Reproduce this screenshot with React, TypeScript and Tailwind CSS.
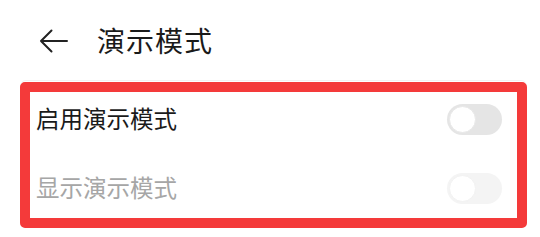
import React from 'react';

const font = { fontFamily: '"Noto Sans CJK SC", "Noto Sans", sans-serif' };

function Toggle({ dim }: { dim?: boolean }) {
  return (
    <div
      className={`flex items-center w-[55px] h-[31px] rounded-full p-[2px] ${
        dim ? 'bg-[#f4f4f4]' : 'bg-[#e5e5e5]'
      }`}
    >
      <div
        className={`w-[27px] h-[27px] rounded-full bg-white border ${
          dim ? 'border-[#f2f2f2]' : 'border-[#e8e8e8]'
        }`}
      />
    </div>
  );
}

export default function App() {
  return (
    <div className="w-[540px] h-[237px] bg-white overflow-hidden" style={font}>
      {/* header */}
      <div className="flex items-center h-[80px] pl-[39px]">
        <svg width="29" height="24" viewBox="0 0 29 24" fill="none" className="mt-[2px]">
          <path d="M28 12H2M12.5 1.5L2 12l10.5 10.5" stroke="#222" strokeWidth="2" strokeLinecap="round" strokeLinejoin="round" />
        </svg>
        <span className="ml-[29px] text-[28px] leading-none text-[#1a1a1a] font-normal tracking-[1px]">演示模式</span>
      </div>

      {/* card */}
      <div className="relative ml-[20px] mr-[13px] border-t border-[#f2f2f2] rounded-t-md">
        <div className="flex items-center justify-between h-[72px] pl-[16px] pr-[25px] pt-[4px]">
          <span className="text-[23.5px] text-[#1a1a1a]">启用演示模式</span>
          <Toggle />
        </div>
        <div className="flex items-center justify-between h-[70px] pl-[16px] pr-[25px]">
          <span className="text-[23.5px] text-[#a6a6a6]">显示演示模式</span>
          <Toggle dim />
        </div>
        {/* highlight annotation */}
        <div className="absolute left-0 top-[1px] w-[507px] h-[146px] border-[10px] border-[#f43a3a] rounded-[5px] pointer-events-none" />
      </div>
    </div>
  );
}
